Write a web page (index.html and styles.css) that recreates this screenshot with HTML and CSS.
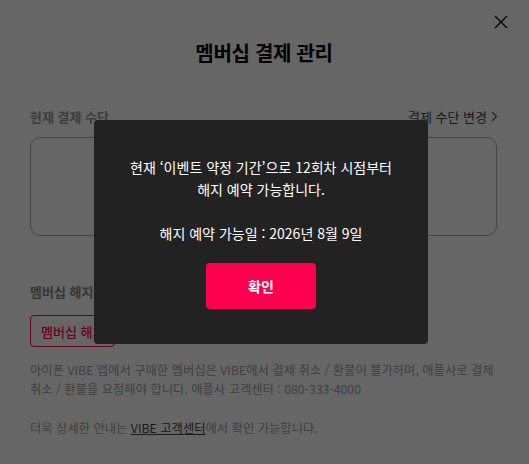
FILE: index.html
```html
<!DOCTYPE html>
<html lang="ko">
<head>
<meta charset="utf-8">
<link rel="stylesheet" href="styles.css">
</head>
<body>
<div class="page">
  <div class="topbar">
    <button class="close" aria-label="닫기">
      <svg width="14" height="14" viewBox="0 0 14 14"><path d="M1 1L13 13M13 1L1 13" stroke="#000" stroke-width="1.3" fill="none"/></svg>
    </button>
  </div>
  <h1 class="title">멤버십 결제 관리</h1>

  <div class="section-head">
    <span class="label">현재 결제 수단</span>
    <a class="change">결제 수단 변경<svg width="7" height="11" viewBox="0 0 7 11"><path d="M1 1l4.5 4.5L1 10" stroke="#555" stroke-width="1.2" fill="none"/></svg></a>
  </div>
  <div class="card"></div>

  <div class="label cancel-label">멤버십 해지</div>
  <button class="cancel-btn">멤버십 해지</button>
  <p class="note">아이폰 VIBE 앱에서 구매한 멤버십은 VIBE에서 결제 취소 / 환불이 불가하며, 애플사로 결제 취소 / 환불을 요청해야 합니다. 애플사 고객센터 : 080-333-4000</p>
  <p class="note more">더욱 상세한 안내는 <a class="link">VIBE 고객센터</a>에서 확인 가능합니다.</p>
</div>

<div class="dim">
  <div class="modal">
    <p class="msg">현재 ‘이벤트 약정 기간’으로 12회차 시점부터<br>해지 예약 가능합니다.<br><br>해지 예약 가능일 : 2026년 8월 9일</p>
    <button class="ok">확인</button>
  </div>
</div>
</body>
</html>
```

FILE: styles.css
```css
* { box-sizing: border-box; }
html, body { margin: 0; padding: 0; }
body {
  width: 529px;
  height: 464px;
  overflow: hidden;
  background: #fff;
  font-family: "Noto Sans CJK KR", "Noto Sans", sans-serif;
  color: #000;
}
.page {
  padding: 0 31px 0 30px;
}
.topbar {
  display: flex;
  justify-content: flex-end;
  padding-top: 15px;
  margin-right: -10px;
}
.close {
  background: none;
  border: 0;
  padding: 0;
  width: 14px;
  height: 14px;
  display: block;
}
.close svg { display: block; }
.title {
  margin: 10px 0 0;
  text-align: center;
  font-size: 20px;
  line-height: 28px;
  font-weight: 700;
  letter-spacing: -0.3px;
  color: #000;
}
.section-head {
  display: flex;
  justify-content: space-between;
  align-items: center;
  margin-top: 39px;
  height: 20px;
}
.label {
  font-size: 13px;
  font-weight: 700;
  color: #999;
}
.change {
  font-size: 13px;
  color: #444;
  display: flex;
  align-items: center;
  gap: 4px;
}
.change svg { display: block; }
.card {
  margin-top: 11px;
  height: 99px;
  border: 1.5px solid #aaa;
  border-radius: 10px;
  margin-right: 1px;
}
.cancel-label {
  margin-top: 46px;
  line-height: 20px;
  color: #888;
}
.cancel-btn {
  margin-top: 13px;
  height: 32px;
  padding: 0 10px;
  border: 1px solid #ff0050;
  border-radius: 4px;
  background: #fff;
  color: #ff0050;
  font-family: inherit;
  font-size: 13px;
  font-weight: 500;
  display: block;
}
.note {
  margin: 14px 0 0;
  font-size: 12.3px;
  line-height: 19px;
  color: #a0a0a0;
  word-break: keep-all;
}
.note.more { margin-top: 20px; }
.link {
  color: #444;
  text-decoration: underline;
}
.dim {
  position: fixed;
  inset: 0;
  background: rgba(0, 0, 0, 0.6);
  display: flex;
  align-items: center;
  justify-content: center;
  padding-right: 7px;
}
.modal {
  width: 334px;
  height: 224px;
  background: #222;
  border-radius: 4px;
  padding: 36px 10px 0;
  display: flex;
  flex-direction: column;
  align-items: center;
}
.msg {
  margin: 0;
  text-align: center;
  color: #fff;
  font-size: 14px;
  line-height: 22px;
}
.ok {
  margin-top: 19px;
  width: 110px;
  height: 46px;
  border: 0;
  border-radius: 4px;
  background: #ff0050;
  color: #fff;
  font-family: inherit;
  font-size: 14px;
  font-weight: 700;
}
```
